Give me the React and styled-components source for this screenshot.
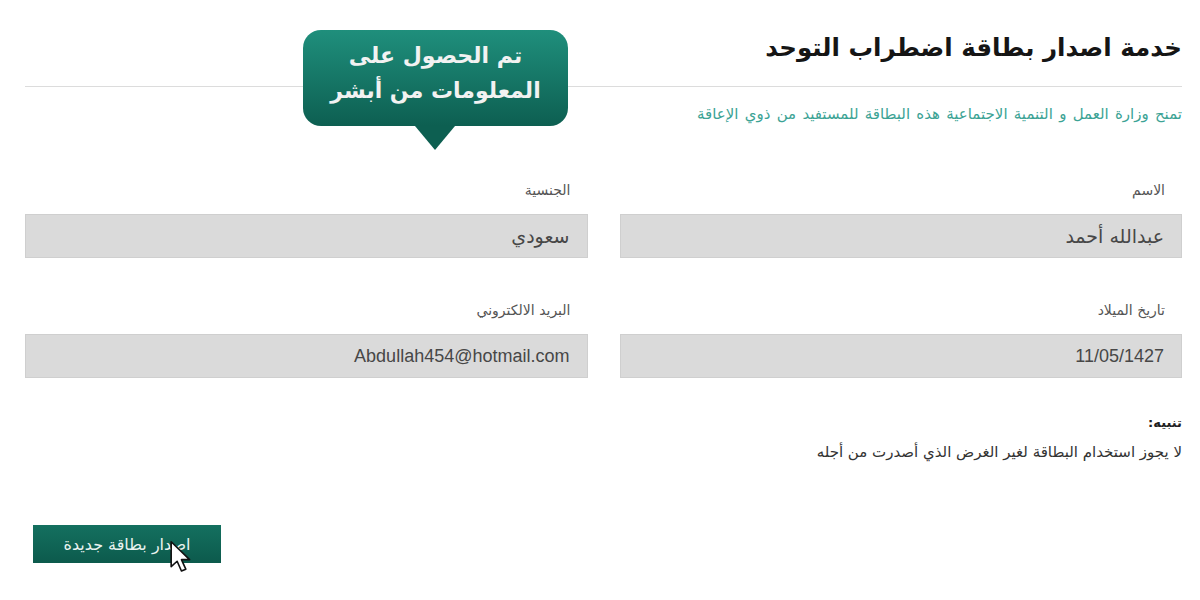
import React from 'react';
import styled, { createGlobalStyle } from 'styled-components';

const GlobalStyle = createGlobalStyle`
  html, body {
    margin: 0;
    padding: 0;
    background: #fff;
  }
  body {
    font-family: "DejaVu Sans", "Noto Sans", sans-serif;
  }
`;

const Page = styled.div`
  position: relative;
  width: 1200px;
  height: 600px;
  box-sizing: border-box;
  padding: 30px 18px 0 25px;
  display: flex;
  flex-direction: column;
  overflow: hidden;
`;

const Title = styled.h1`
  margin: 0;
  font-size: 24.5px;
  line-height: 36px;
  font-weight: bold;
  color: #151515;
`;

const Divider = styled.hr`
  margin: 20px 0 0;
  border: none;
  border-top: 1px solid #dcdcdc;
`;

const Subtitle = styled.p`
  margin: 17px 0 0;
  font-size: 15px;
  line-height: 20px;
  word-spacing: 1.5px;
  color: #3ca395;
`;

const Grid = styled.div`
  margin-top: 57px;
  display: grid;
  grid-template-columns: 1fr 1fr;
  column-gap: 32px;
  row-gap: 43px;
`;

const Field = styled.div`
  display: flex;
  flex-direction: column;
`;

const Label = styled.label`
  font-size: 14px;
  line-height: 18px;
  color: #555;
  margin: 0 17px 15px 0;
`;

const Input = styled.div`
  height: 44px;
  box-sizing: border-box;
  background: #dadada;
  border: 1px solid #cfcfcf;
  padding: 0 17px;
  display: flex;
  align-items: center;
  font-size: ${(p) => (p.$latin ? '18px' : '19px')};
  font-family: ${(p) => (p.$latin ? '"Liberation Sans", Arial, sans-serif' : 'inherit')};
  color: #474747;
`;

const NoteTitle = styled.div`
  margin-top: 36px;
  font-size: 13px;
  line-height: 18px;
  font-weight: bold;
  color: #222;
`;

const NoteText = styled.p`
  margin: 10px 0 0;
  font-size: 15px;
  line-height: 20px;
  color: #333;
`;

const Button = styled.button`
  position: relative;
  align-self: flex-end;
  margin: 63px 0 0 8px;
  width: 188px;
  height: 38px;
  border: none;
  background: linear-gradient(to bottom, #14705f, #0c5a4c);
  color: #e9f3f0;
  font-family: inherit;
  font-size: 16px;
  padding: 0;
  cursor: pointer;
`;

const Cursor = styled.svg`
  position: absolute;
  left: 136px;
  top: 15px;
`;

const Bubble = styled.div`
  position: absolute;
  left: 303px;
  top: 30px;
  width: 265px;
  height: 96px;
  box-sizing: border-box;
  padding-bottom: 11px;
  border-radius: 18px;
  background: linear-gradient(to bottom, #1f8f7c, #0d5f51);
  color: #f2f2f2;
  display: flex;
  align-items: center;
  justify-content: center;
  text-align: center;
  font-size: 22px;
  font-weight: bold;
  line-height: 35px;

  &::after {
    content: '';
    position: absolute;
    left: 112px;
    bottom: -24px;
    border-left: 20px solid transparent;
    border-right: 20px solid transparent;
    border-top: 24px solid #0d5f51;
  }
`;

const fields = [
  { label: 'الاسم', value: 'عبدالله أحمد' },
  { label: 'الجنسية', value: 'سعودي' },
  { label: 'تاريخ الميلاد', value: '11/05/1427', latin: true },
  { label: 'البريد الالكتروني', value: 'Abdullah454@hotmail.com', latin: true },
];

export default function App() {
  return (
    <>
      <GlobalStyle />
      <Page dir="rtl">
        <Title>خدمة اصدار بطاقة اضطراب التوحد</Title>
        <Divider />
        <Subtitle>تمنح وزارة العمل و التنمية الاجتماعية هذه البطاقة للمستفيد من ذوي الإعاقة</Subtitle>
        <Grid>
          {fields.map((f) => (
            <Field key={f.label}>
              <Label>{f.label}</Label>
              <Input $latin={f.latin}>{f.value}</Input>
            </Field>
          ))}
        </Grid>
        <NoteTitle>تنبيه:</NoteTitle>
        <NoteText>لا يجوز استخدام البطاقة لغير الغرض الذي أصدرت من أجله</NoteText>
        <Button>
          اصدار بطاقة جديدة
          <Cursor width="26" height="36" viewBox="0 0 24 32">
            <path d="M2 1 L2 24 L7.5 19 L11.5 28 L15.5 26.3 L11.5 17.5 L19 17.5 Z" fill="#fff" stroke="#111" strokeWidth="1.5" strokeLinejoin="round" />
          </Cursor>
        </Button>
        <Bubble>
          تم الحصول على
          <br />
          المعلومات من أبشر
        </Bubble>
      </Page>
    </>
  );
}
